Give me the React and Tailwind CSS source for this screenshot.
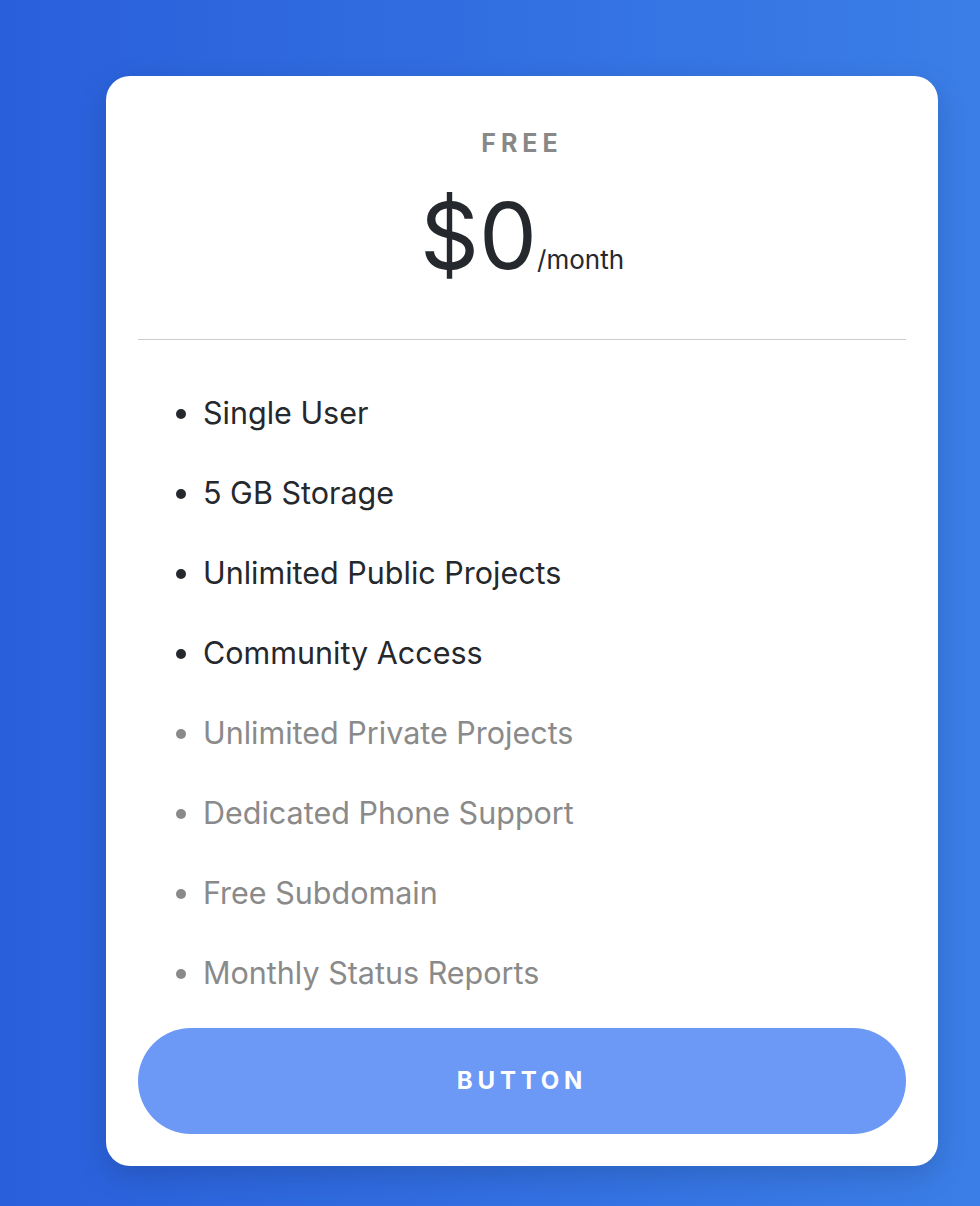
export default function App() {
  const features = [
    { label: "Single User", on: true },
    { label: "5 GB Storage", on: true },
    { label: "Unlimited Public Projects", on: true },
    { label: "Community Access", on: true },
    { label: "Unlimited Private Projects", on: false },
    { label: "Dedicated Phone Support", on: false },
    { label: "Free Subdomain", on: false },
    { label: "Monthly Status Reports", on: false },
  ];

  return (
    <div
      className="min-h-[1206px] w-[980px] bg-linear-to-r from-[#2a5fdb] to-[#3b7ee7] pl-[106px] pt-[76px] pb-[40px]"
      style={{ fontFamily: "Inter, 'Noto Sans', sans-serif" }}
    >
      <div className="w-[832px] rounded-[24px] bg-white px-[32px] pt-[51px] pb-[32px] shadow-[0_10px_30px_rgba(0,0,0,0.15)]">
        <div className="text-center text-[25px] leading-[32px] font-bold tracking-[0.2em] text-[#888]">
          FREE
        </div>
        <div className="mt-[27px] flex items-baseline justify-center text-[#25282c]">
          <span className="text-[92px] leading-[100px] font-normal">$0</span>
          <span className="text-[26px] leading-[32px]">/month</span>
        </div>
        <hr className="mt-[53px] border-0 border-t border-[#ccc]" />
        <ul className="mt-[55px] list-disc space-y-[44px] pl-[65px] text-[30.5px]">
          {features.map((f) => (
            <li
              key={f.label}
              className={`leading-[36px] ${f.on ? "text-[#25282c] marker:text-[#25282c]" : "text-[#8a8a8a] marker:text-[#8a8a8a]"}`}
            >
              {f.label}
            </li>
          ))}
        </ul>
        <button className="mt-[37px] flex h-[106px] w-full items-center justify-center rounded-full bg-[#6c98f6] text-[24px] font-bold tracking-[0.2em] text-white">
          BUTTON
        </button>
      </div>
    </div>
  );
}
